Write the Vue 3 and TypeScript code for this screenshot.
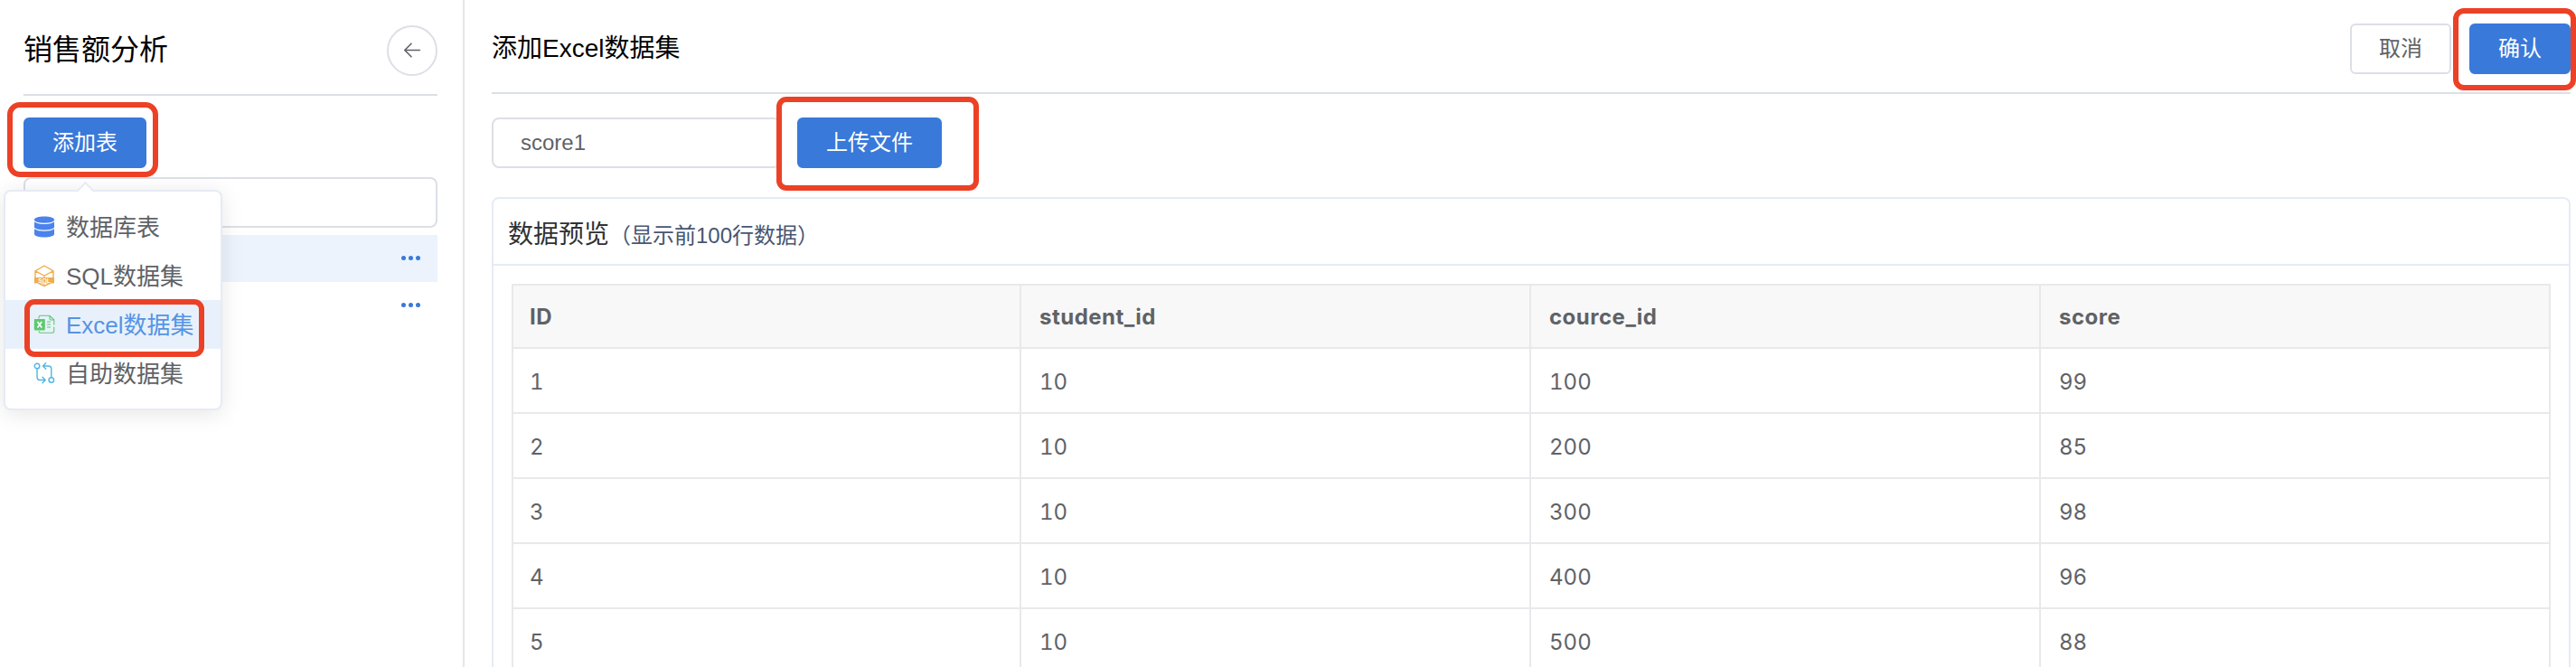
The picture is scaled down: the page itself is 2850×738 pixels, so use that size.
<script setup lang="ts">
interface Row { id: number; student: number; course: number; score: number }

const columns: string[] = ['ID', 'student_id', 'cource_id', 'score']
const rows: Row[] = [
  { id: 1, student: 10, course: 100, score: 99 },
  { id: 2, student: 10, course: 200, score: 85 },
  { id: 3, student: 10, course: 300, score: 98 },
  { id: 4, student: 10, course: 400, score: 96 },
  { id: 5, student: 10, course: 500, score: 88 },
]
const menu: { key: string; label: string }[] = [
  { key: 'db', label: '数据库表' },
  { key: 'sql', label: 'SQL数据集' },
  { key: 'excel', label: 'Excel数据集' },
  { key: 'self', label: '自助数据集' },
]
</script>

<template>
  <div class="page">
    <aside class="sidebar">
      <header class="side-head">
        <h2>销售额分析</h2>
        <button class="back" aria-label="back">
          <svg width="20" height="18" viewBox="0 0 20 18"><path d="M18.4 8.5H2M9 1.2 1.8 8.5 9 15.8" /></svg>
        </button>
      </header>
      <div class="add-row">
        <button class="btn primary add">添加表</button>
        <span class="mark mark-add"></span>
        <div class="popover">
          <span class="arrow"></span>
          <div v-for="m in menu" :key="m.key" class="item" :class="{ active: m.key === 'excel' }">
            <svg v-if="m.key === 'db'" class="icon" viewBox="0 0 24 24">
              <path fill="#4b83ec" d="M1 4C1 2 6 .5 12 .5S23 2 23 4V20C23 22 18 23.500 12 23.500S1 22 1 20Z" />
              <path fill="none" stroke="#fff" stroke-width="1.200" d="M1 5.500C2 7.300 6.500 8.300 12 8.300S22 7.300 23 5.500M1 13.300C2 15.100 6.500 16.100 12 16.100S22 15.100 23 13.300" />
            </svg>
            <svg v-else-if="m.key === 'sql'" class="icon" viewBox="0 0 24 24">
              <path fill="none" stroke="#eeae4f" stroke-width="1.400" stroke-linejoin="round" d="M2 14V6.800L12 1 22 6.800V14M2 6.800 12 12 22 6.800M12 12V15M5 20 12 23.500 19 20M12 20V23" />
              <path fill="#eeae4f" d="M1 14H23V20.400H1Z" />
              <text x="12" y="19.700" text-anchor="middle" class="sql">SQL</text>
            </svg>
            <svg v-else-if="m.key === 'excel'" class="icon" viewBox="0 0 24 24">
              <path fill="none" stroke="#5dca70" stroke-width="1.100" stroke-linecap="round" stroke-linejoin="round" d="M6 5V4Q6 2.300 7.700 2.300H18L22.800 7V12M18 2.300V5.800Q18 7 19.200 7H22.800M22.800 15V19.500Q22.800 21.200 21 21.200H7.700Q6 21.200 6 19.500M15.500 9H18.500M15.500 12H18.500M15.500 15H18.500" />
              <rect x=".8" y="6" width="12" height="12.500" rx="1" fill="#5dca70" />
              <path stroke="#fff" stroke-width="1.600" d="M4.500 9 9.200 15.500M9.200 9 4.500 15.500" />
            </svg>
            <svg v-else class="icon" viewBox="0 0 24 24">
              <g fill="none" stroke="#52b5e4" stroke-width="1.400" stroke-linecap="round" stroke-linejoin="round">
                <circle cx="4" cy="4" r="2.800" /><circle cx="19.800" cy="19.500" r="2.800" />
                <path d="M4 7V16Q4 19.500 7.500 19.500H13M10 16.300 13.200 19.500 10 22.700M19.800 16.500V7.500Q19.800 4 16.500 4H10.500M13.700 .8 10.500 4 13.700 7.200" />
              </g>
            </svg>
            <span class="label">{{ m.label }}</span>
            <span v-if="m.key === 'excel'" class="mark mark-excel"></span>
          </div>
        </div>
      </div>
      <div class="search"></div>
      <div v-for="n in 2" :key="n" class="table-item" :class="{ selected: n === 1 }">
        <i></i><i></i><i></i>
      </div>
    </aside>

    <main class="main">
      <header class="main-head">
        <h1>添加Excel数据集</h1>
        <div class="actions">
          <button class="btn">取消</button>
          <button class="btn primary">确认<span class="mark mark-ok"></span></button>
        </div>
      </header>
      <div class="form-row">
        <div class="name">score1</div>
        <button class="btn primary">上传文件<span class="mark mark-upload"></span></button>
      </div>
      <section class="card">
        <div class="card-head">数据预览<small>（显示前100行数据）</small></div>
        <div class="grid">
          <div v-for="c in columns" :key="c" class="cell th">{{ c }}</div>
          <template v-for="r in rows" :key="r.id">
            <div class="cell">{{ r.id }}</div>
            <div class="cell">{{ r.student }}</div>
            <div class="cell">{{ r.course }}</div>
            <div class="cell">{{ r.score }}</div>
          </template>
        </div>
      </section>
    </main>
  </div>
</template>

<style>
html, body { margin: 0; background: #fff; overflow: hidden; }
</style>

<style scoped>
* { box-sizing: border-box; }
.page { display: flex; width: 2850px; height: 738px; overflow: hidden; background: #fff; color: #606266; font-family: "Liberation Sans", "Noto Sans CJK SC", sans-serif; font-size: 24px; }
h1, h2 { margin: 0; font-weight: 400; color: #000; }
.sidebar { width: 514px; flex: none; padding: 0 28px 0 26px; border-right: 2px solid #e6e6e6; }
.side-head { height: 106px; display: flex; align-items: center; justify-content: space-between; border-bottom: 2px solid #dcdfe6; padding-top: 8px; }
.side-head h2 { font-size: 32px; line-height: 40px; padding-bottom: 2px; }
.back { width: 56px; height: 56px; padding: 0; border: 2px solid #dcdfe6; border-radius: 50%; background: #fff; display: flex; align-items: center; justify-content: center; }
.back svg { fill: none; stroke: #606266; stroke-width: 1.6; stroke-linecap: round; stroke-linejoin: round; }
.add-row { position: relative; padding-top: 24px; height: 90px; }
.btn { position: relative; height: 56px; padding: 0 30px; border: 2px solid #dcdfe6; border-radius: 6px; background: #fff; color: #606266; font: inherit; line-height: 52px; white-space: nowrap; }
.btn.primary { background: #3979da; border-color: #3979da; color: #fff; }
.mark { position: absolute; border: 6px solid #ec4126; border-radius: 14px; z-index: 5; pointer-events: none; }
.mark-add { left: -18px; top: 7px; width: 167px; height: 83px; }
.popover { position: absolute; z-index: 3; left: -22px; top: 104px; width: 242px; height: 244px; padding: 12px 0; background: #fff; border: 2px solid #e6ebf5; border-radius: 8px; box-shadow: 0 4px 24px rgba(0, 0, 0, .1); }
.arrow { position: absolute; left: 80.5px; top: -8px; width: 15px; height: 15px; background: #fff; border: solid #e6ebf5; border-width: 2px 0 0 2px; transform: rotate(45deg); }
.item { position: relative; height: 54px; padding-left: 31px; display: flex; align-items: center; font-size: 26px; }
.item.active { background: #e8f1fb; color: #5694e5; }
.icon { width: 24px; height: 24px; margin-right: 12px; }
.label { padding-bottom: 4px; }
.sql { font: 700 6.5px "Liberation Sans", sans-serif; fill: #fff; }
.mark-excel { left: 21px; top: -1px; width: 199px; height: 64px; border-radius: 11px; }
.search { height: 56px; border: 2px solid #dcdfe6; border-radius: 8px; margin-bottom: 8px; }
.table-item { height: 52px; display: flex; justify-content: flex-end; align-items: center; gap: 2.6px; padding: 0 19px 1px 0; }
.table-item.selected { background: #ecf3fc; }
.table-item i { width: 5.3px; height: 5.3px; border-radius: 50%; background: #3979da; }
.main { flex: 1; padding: 0 6px 0 30px; min-width: 0; }
.main-head { height: 104px; display: flex; align-items: flex-start; justify-content: space-between; padding-top: 26px; border-bottom: 2px solid #dcdfe6; }
.main-head h1 { font-size: 28px; line-height: 55px; }
.actions { display: flex; gap: 20px; }
.mark-ok { left: -20px; top: -19px; width: 136px; height: 91px; border-radius: 12px; }
.form-row { display: flex; gap: 18px; padding: 26px 0 32px; }
.name { width: 320px; height: 56px; border: 2px solid #dcdfe6; border-radius: 8px; padding-left: 30px; line-height: 52px; }
.mark-upload { left: -25px; top: -25px; width: 224px; height: 104px; border-radius: 11px; }
.card { height: 540px; border: 2px solid #e6ebf5; border-radius: 8px; }
.card-head { height: 74px; border-bottom: 2px solid #e6ebf5; padding-left: 16px; font-size: 28px; line-height: 79px; color: #303133; }
.card-head small { font-size: 24px; color: #475672; }
.grid { margin: 20px; border: solid #e8e9eb; border-width: 2px 0 0 2px; display: grid; grid-template-columns: 562px 564px 564px 564px; }
.cell { height: 72px; padding-left: 20px; line-height: 73px; border: solid #e8e9eb; border-width: 0 2px 2px 0; font-family: Inter, sans-serif; font-variant-numeric: tabular-nums; }
.cell:nth-child(4n + 1) { padding-left: 18px; }
.cell.th { height: 70px; line-height: 69px; font-weight: 700; letter-spacing: .5px; background: #f8f8f9; }
</style>
